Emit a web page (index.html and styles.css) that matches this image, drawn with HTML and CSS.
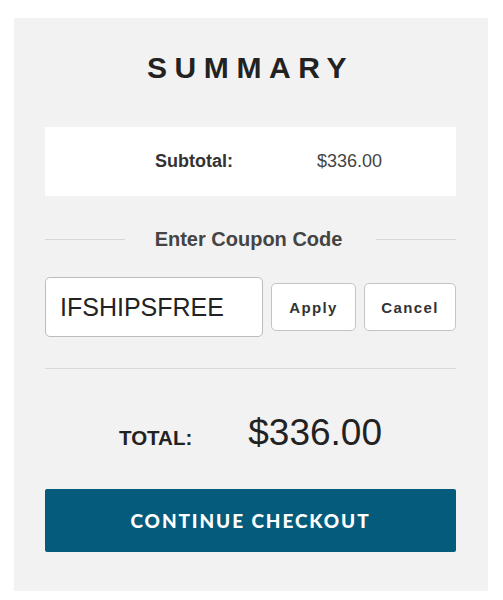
FILE: index.html
```html
<!DOCTYPE html>
<html lang="en">
<head>
  <meta charset="UTF-8">
  <meta name="viewport" content="width=device-width, initial-scale=1.0">
  <title>Summary</title>
  <link rel="stylesheet" href="styles.css">
</head>
<body>
  <div class="summary">
    <h1 class="summary-title">SUMMARY</h1>

    <div class="subtotal">
      <span class="subtotal-label">Subtotal:</span>
      <span class="subtotal-value">$336.00</span>
    </div>

    <div class="coupon-heading">
      <span class="coupon-line"></span>
      <span class="coupon-text">Enter Coupon Code</span>
      <span class="coupon-line"></span>
    </div>

    <form class="coupon-form" id="couponForm">
      <input type="text" class="coupon-input" value="IFSHIPSFREE">
      <button type="submit" class="coupon-btn apply-btn">Apply</button>
      <button type="button" class="coupon-btn cancel-btn">Cancel</button>
    </form>

    <hr class="divider">

    <div class="total">
      <span class="total-label">TOTAL:</span>
      <span class="total-value">$336.00</span>
    </div>

    <button class="checkout-btn">CONTINUE CHECKOUT</button>
  </div>
</body>
</html>
```

FILE: styles.css
```css
* {
  margin: 0;
  padding: 0;
  box-sizing: border-box;
  font-family: 'Liberation Sans', Arial, sans-serif;
}

body {
  background-color: #ffffff;
  color: #333;
}

.summary {
  background-color: #f2f2f2;
  margin: 18px 15px 0 14px;
  padding: 33px 32px 39px 31px;
}

.summary-title {
  text-align: center;
  font-size: 30px;
  line-height: 34px;
  font-weight: bold;
  letter-spacing: 7.6px;
  padding-left: 0;
  color: #222;
}

.subtotal {
  margin-top: 42px;
  background-color: #fff;
  height: 69px;
  display: flex;
  align-items: center;
  padding-left: 110px;
  gap: 84px;
  font-size: 18px;
}

.subtotal-label {
  font-weight: bold;
  color: #333;
}

.subtotal-value {
  color: #444;
}

.coupon-heading {
  margin-top: 31px;
  display: flex;
  align-items: center;
  gap: 30px;
  line-height: 24px;
}

.coupon-line {
  flex: 1;
  height: 1px;
  background-color: #d6d6d6;
}

.coupon-text {
  font-size: 20px;
  font-weight: bold;
  color: #444;
  margin-right: 4px;
}

.coupon-form {
  margin-top: 26px;
  display: flex;
  align-items: center;
  gap: 8px;
}

.coupon-input {
  flex: 1;
  min-width: 0;
  height: 60px;
  padding: 0 14px;
  border: 1px solid #bcbcbc;
  border-radius: 5px;
  background-color: #fff;
  font-size: 25px;
  color: #222;
}

.coupon-input:focus {
  outline: none;
}

.coupon-btn {
  height: 48px;
  border: 1px solid #c4c4c4;
  border-radius: 5px;
  background-color: #fff;
  font-size: 15px;
  font-weight: bold;
  letter-spacing: 1.4px;
  color: #333;
  cursor: pointer;
}

.apply-btn {
  width: 85px;
}

.cancel-btn {
  width: 92px;
}

.divider {
  margin-top: 31px;
  border: none;
  height: 1px;
  background-color: #d9d9d9;
}

.total {
  margin-top: 44px;
  display: flex;
  justify-content: center;
  align-items: baseline;
  gap: 56px;
  line-height: 40px;
}

.total-label {
  font-size: 20.5px;
  font-weight: bold;
  color: #222;
}

.total-value {
  font-size: 37px;
  color: #222;
}

.checkout-btn {
  display: block;
  width: 100%;
  height: 63px;
  margin-top: 31px;
  border: none;
  border-radius: 2px;
  background-color: #055b7c;
  color: #fff;
  font-family: Lato, sans-serif;
  font-size: 19px;
  font-weight: 900;
  letter-spacing: 1.9px;
  cursor: pointer;
}
```
